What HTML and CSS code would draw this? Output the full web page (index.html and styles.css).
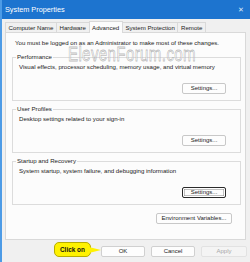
FILE: index.html
```html
<!DOCTYPE html>
<html lang="en">
<head>
  <meta charset="UTF-8">
  <meta name="viewport" content="width=device-width, initial-scale=1.0">
  <title>System Properties</title>
  <link rel="stylesheet" href="styles.css">
</head>
<body>

<div class="window">
  <div class="titlebar">
    <span class="title">System Properties</span>
    <span class="close">&#x2715;</span>
  </div>

  <div class="client">
    <div class="tabs">
      <div class="tab">Computer Name</div>
      <div class="tab">Hardware</div>
      <div class="tab active">Advanced</div>
      <div class="tab">System Protection</div>
      <div class="tab">Remote</div>
    </div>

    <div class="panel">
      <p class="note">You must be logged on as an Administrator to make most of these changes.</p>

      <fieldset class="group">
        <legend>Performance</legend>
        <p class="desc">Visual effects, processor scheduling, memory usage, and virtual memory</p>
        <div class="row"><button class="btn">Settings...</button></div>
      </fieldset>

      <fieldset class="group">
        <legend>User Profiles</legend>
        <p class="desc">Desktop settings related to your sign-in</p>
        <div class="row"><button class="btn">Settings...</button></div>
      </fieldset>

      <fieldset class="group">
        <legend>Startup and Recovery</legend>
        <p class="desc">System startup, system failure, and debugging information</p>
        <div class="row"><button class="btn btn-focus">Settings...</button></div>
      </fieldset>

      <div class="row env-row"><button class="btn btn-env">Environment Variables...</button></div>
    </div>

    <div class="footer">
      <button class="btn btn-dlg">OK</button>
      <button class="btn btn-dlg">Cancel</button>
      <button class="btn btn-dlg btn-disabled">Apply</button>
    </div>
  </div>

  <!-- overlays -->
  <div class="watermark">ElevenForum.com</div>
  <div class="callout">Click on</div>
</div>

</body>
</html>
```

FILE: styles.css
```css
/* Page */
body {
  margin: 0;
  font-family: "Liberation Sans", Arial, sans-serif;
  color: #1b1b1b;
}

/* Window frame */
.window {
  position: relative;
  width: 250px;
  height: 262px;
  box-sizing: border-box;
  display: flex;
  flex-direction: column;
  background-color: #f0f0f0;
  border-left: 2px solid #4d9be6;
  overflow: hidden;
}

/* Title bar */
.titlebar {
  height: 19px;
  flex-shrink: 0;
  display: flex;
  align-items: center;
  justify-content: space-between;
  padding: 0 6px 0 3px;
  background-color: #1d74cf;
  color: #fff;
  font-size: 7.3px;
}

.titlebar .close {
  font-size: 7px;
  color: #dce9f7;
}

/* Client area */
.client {
  flex: 1;
  display: flex;
  flex-direction: column;
  padding: 2px 4px 0 3px;
  font-size: 6.1px;
}

/* Tabs */
.tabs {
  display: flex;
  align-items: flex-end;
  height: 11px;
  position: relative;
  z-index: 1;
}

.tab {
  height: 9px;
  line-height: 9px;
  padding: 0 2.6px;
  border: 1px solid #d9d9d9;
  border-bottom: none;
  margin-right: -1px;
  background-color: #f0f0f0;
  white-space: nowrap;
}

.tab.active {
  height: 11px;
  line-height: 11px;
  margin-bottom: -1px;
  background-color: #fcfcfc;
}

/* Tab panel */
.panel {
  height: 208px;
  box-sizing: border-box;
  display: flex;
  flex-direction: column;
  padding: 6px 4px 0 6px;
  background-color: #fcfcfc;
  border: 1px solid #d9d9d9;
}

.note {
  margin: 0 0 6px 3px;
  line-height: 8px;
  white-space: nowrap;
}

/* Group boxes */
.group {
  margin: 0 0 4px 0;
  padding: 2px 6px 6px 6px;
  border: 1px solid #dcdcdc;
  min-width: 0;
}

.group legend {
  margin-left: -3px;
  padding: 0 1px;
  line-height: 8px;
}

.desc {
  margin: 0;
  line-height: 8px;
  white-space: nowrap;
}

.row {
  display: flex;
  justify-content: flex-end;
  margin-top: 12px;
  padding-right: 8px;
}

/* Buttons */
.btn {
  height: 11px;
  width: 44px;
  padding: 0;
  font-family: inherit;
  font-size: 6px;
  line-height: 9px;
  color: #1b1b1b;
  background-color: #fdfdfd;
  border: 1px solid #c8c8c8;
  border-radius: 2px;
}

.btn-focus {
  border-color: #2b2b2b;
  box-shadow: inset 0 0 0 1px #fff, inset 0 0 0 1.5px #888;
}

.env-row {
  margin-top: 4px;
  padding-right: 9px;
}

.btn-env {
  width: 76px;
}

/* Dialog buttons */
.footer {
  display: flex;
  justify-content: flex-end;
  gap: 6px;
  margin-top: 6px;
  margin-right: -1px;
}

.btn-dlg {
  width: 44px;
  border-color: #d0d0d0;
}

.btn-disabled {
  width: 46px;
  color: #a8a8a8;
  background-color: #f4f4f4;
  border-color: #e2e2e2;
}

/* Watermark over the content */
.watermark {
  position: absolute;
  left: 30px;
  top: 48px;
  width: 200px;
  text-align: center;
  font-size: 21px;
  line-height: 12px;
  letter-spacing: 0.5px;
  color: rgba(255, 255, 255, 0.55);
  -webkit-text-stroke: 0.8px rgba(110, 110, 110, 0.45);
  transform: scaleX(0.72);
  pointer-events: none;
}

/* Yellow callout */
.callout {
  position: absolute;
  left: 52px;
  top: 242px;
  width: 37px;
  height: 15px;
  line-height: 14px;
  padding-left: 5px;
  box-sizing: border-box;
  font-size: 6.4px;
  font-weight: bold;
  color: #111;
  background-color: #fff200;
  border: 1px solid #b8ad00;
  border-radius: 5px;
}

.callout::after {
  content: "";
  position: absolute;
  right: -11px;
  top: 4px;
  border-top: 3px solid transparent;
  border-bottom: 3px solid transparent;
  border-left: 12px solid #fff200;
}
```
